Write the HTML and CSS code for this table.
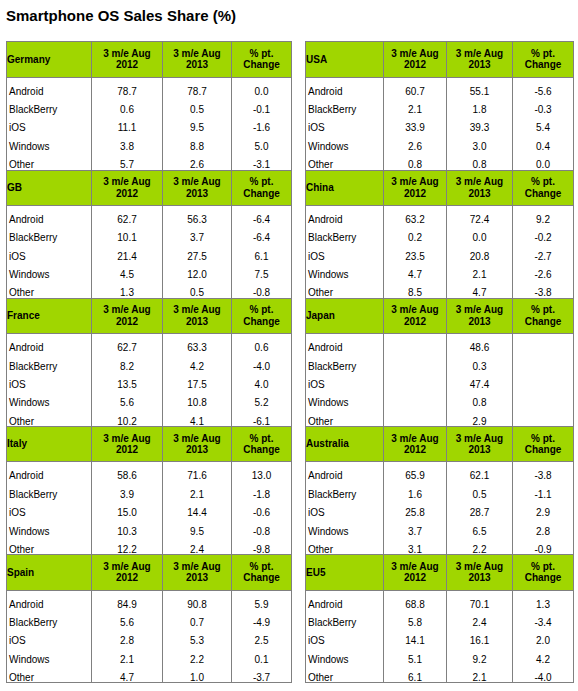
FILE: index.html
```html
<!DOCTYPE html>
<html lang="en">

<head>
  <meta charset="UTF-8">
  <meta name="viewport" content="width=device-width, initial-scale=1.0">
  <title>Smartphone OS Sales Share</title>
  <link rel="stylesheet" href="styles.css">
</head>

<body>
  <h1 class="title">Smartphone OS Sales Share (%)</h1>
  <div class="tables">
    <table class="share left">
      <colgroup>
        <col style="width:85px">
        <col style="width:71px">
        <col style="width:69px">
        <col style="width:61px">
      </colgroup>
      <tbody></tbody>
    </table>
    <table class="share right">
      <colgroup>
        <col style="width:78px">
        <col style="width:63px">
        <col style="width:66px">
        <col style="width:62px">
      </colgroup>
      <tbody></tbody>
    </table>
  </div>
  <script>
    const os = ['Android', 'BlackBerry', 'iOS', 'Windows', 'Other']

    const leftData = [
      { name: 'Germany', rows: [['78.7', '78.7', '0.0'], ['0.6', '0.5', '-0.1'], ['11.1', '9.5', '-1.6'], ['3.8', '8.8', '5.0'], ['5.7', '2.6', '-3.1']] },
      { name: 'GB', rows: [['62.7', '56.3', '-6.4'], ['10.1', '3.7', '-6.4'], ['21.4', '27.5', '6.1'], ['4.5', '12.0', '7.5'], ['1.3', '0.5', '-0.8']] },
      { name: 'France', rows: [['62.7', '63.3', '0.6'], ['8.2', '4.2', '-4.0'], ['13.5', '17.5', '4.0'], ['5.6', '10.8', '5.2'], ['10.2', '4.1', '-6.1']] },
      { name: 'Italy', rows: [['58.6', '71.6', '13.0'], ['3.9', '2.1', '-1.8'], ['15.0', '14.4', '-0.6'], ['10.3', '9.5', '-0.8'], ['12.2', '2.4', '-9.8']] },
      { name: 'Spain', rows: [['84.9', '90.8', '5.9'], ['5.6', '0.7', '-4.9'], ['2.8', '5.3', '2.5'], ['2.1', '2.2', '0.1'], ['4.7', '1.0', '-3.7']] }
    ]

    const rightData = [
      { name: 'USA', rows: [['60.7', '55.1', '-5.6'], ['2.1', '1.8', '-0.3'], ['33.9', '39.3', '5.4'], ['2.6', '3.0', '0.4'], ['0.8', '0.8', '0.0']] },
      { name: 'China', rows: [['63.2', '72.4', '9.2'], ['0.2', '0.0', '-0.2'], ['23.5', '20.8', '-2.7'], ['4.7', '2.1', '-2.6'], ['8.5', '4.7', '-3.8']] },
      { name: 'Japan', rows: [['', '48.6', ''], ['', '0.3', ''], ['', '47.4', ''], ['', '0.8', ''], ['', '2.9', '']] },
      { name: 'Australia', rows: [['65.9', '62.1', '-3.8'], ['1.6', '0.5', '-1.1'], ['25.8', '28.7', '2.9'], ['3.7', '6.5', '2.8'], ['3.1', '2.2', '-0.9']] },
      { name: 'EU5', rows: [['68.8', '70.1', '1.3'], ['5.8', '2.4', '-3.4'], ['14.1', '16.1', '2.0'], ['5.1', '9.2', '4.2'], ['6.1', '2.1', '-4.0']] }
    ]

    function render(data) {
      return data.map(block => {
        const head = `
        <tr class="head">
          <th>${block.name}</th>
          <th>3 m/e Aug<br>2012</th>
          <th>3 m/e Aug<br>2013</th>
          <th>% pt.<br>Change</th>
        </tr>`
        const body = block.rows.map((r, i) => `
        <tr>
          <td>${os[i]}</td>
          <td>${r[0]}</td>
          <td>${r[1]}</td>
          <td>${r[2]}</td>
        </tr>`).join('')
        return head + body
      }).join('')
    }

    document.querySelector('.left tbody').innerHTML = render(leftData)
    document.querySelector('.right tbody').innerHTML = render(rightData)
  </script>
</body>

</html>
```

FILE: styles.css
```css
* {
  margin: 0;
  padding: 0;
  box-sizing: border-box;
}

body {
  font-family: "Liberation Sans", Arial, sans-serif;
  color: #000;
  background: #fff;
  padding: 7px 6px 0;
}

.title {
  font-size: 15px;
  line-height: 18px;
  font-weight: bold;
  margin-bottom: 16.3px;
}

.tables {
  display: flex;
  align-items: flex-start;
  gap: 13px;
}

.share {
  border-collapse: separate;
  border-spacing: 0;
  table-layout: fixed;
  font-size: 10px;
}

.share.left {
  width: 286px;
}

.share.right {
  width: 269px;
}

.share th,
.share td {
  border-left: 1px solid #808080;
  text-align: center;
  white-space: nowrap;
}

.share th:last-child,
.share td:last-child {
  border-right: 1px solid #808080;
}

.share th {
  background: #a0d600;
  font-weight: bold;
  line-height: 11.5px;
  padding: 5.65px 0;
  border-top: 1px solid #808080;
  border-bottom: 1px solid #808080;
  vertical-align: middle;
}

.share th:first-child {
  text-align: left;
}

.share td {
  line-height: 9.33px;
  padding: 9.07px 0 0;
}

.share td:first-child {
  text-align: left;
  padding-left: 2px;
}

.share tr:last-child td {
  border-bottom: 1px solid #808080;
}
```
